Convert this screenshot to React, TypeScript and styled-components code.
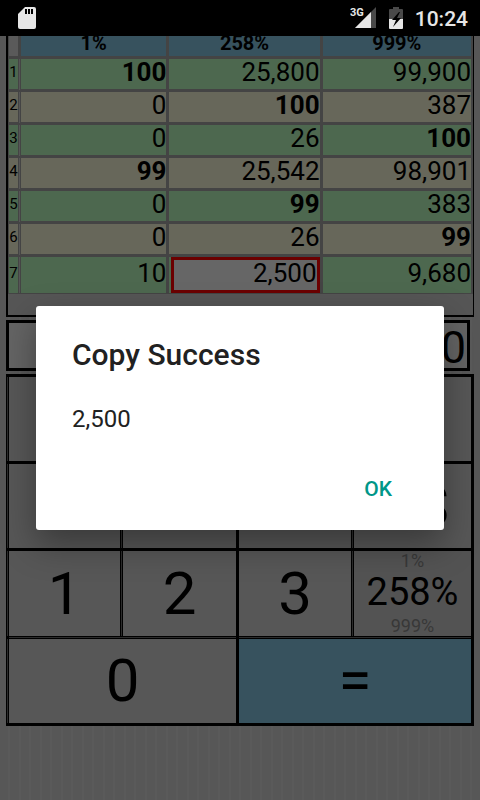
import React, { useState } from "react";
import styled, { createGlobalStyle, css } from "styled-components";

const line = "#444444";
const green = "#4d684f";
const sand = "#67675a";
const blue = "#37525e";
const seam = "#2c2c2c";

const Global = createGlobalStyle`
  * { box-sizing: border-box; }
  body {
    margin: 0;
    background: #575757;
    font-family: Roboto, sans-serif;
    color: #000;
  }
  button, input { font-family: inherit; color: inherit; }
`;

const Page = styled.div`
  position: relative;
  min-height: 100vh;
  display: flex;
  flex-direction: column;
  overflow: hidden;
  background: repeating-linear-gradient(
    90deg,
    #575757 0 8px,
    #5a5a5a 8px 10px,
    #575757 10px 19px,
    #5a5a5a 19px 21px
  );
`;

const StatusBar = styled.header`
  display: flex;
  align-items: center;
  height: 36px;
  padding: 0 12px 0 18px;
  background: #000;
  color: #e6e6e6;
`;

const StatusIcons = styled.div`
  display: flex;
  align-items: center;
  margin-left: auto;
  gap: 12px;
`;

const Clock = styled.time`
  font-size: 21px;
  line-height: 24px;
  font-weight: 500;
  padding-top: 1px;
`;

const Calculator = styled.main`
  display: flex;
  flex-direction: column;
  padding: 0 6px;
`;

const Results = styled.section`
  height: 281px;
  overflow: hidden;
  border: solid #000;
  border-width: 0 1px 2px 2px;
  background: #565656;
`;

const Sheet = styled.table`
  width: 100%;
  margin-top: -6px;
  table-layout: fixed;
  border-spacing: 0;
  border-left: 1px solid ${line};
  col:nth-child(1) { width: 12px; }
  col:nth-child(2) { width: 32%; }
  col:nth-child(3) { width: 33%; }
`;

const HeadCell = styled.th<{ $blank?: boolean }>`
  height: 29px;
  padding: 0;
  border: solid ${line};
  border-width: 0 3px 3px 0;
  background: ${(p) => (p.$blank ? "#5a5a5a" : blue)};
  font-size: 20px;
  line-height: 26px;
  font-weight: 700;
  &:last-child { border-right-width: 2px; }
`;

const Row = styled.tr<{ $tall?: boolean }>`
  height: ${(p) => (p.$tall ? 37 : 33)}px;
  > * {
    background: ${green};
    background-clip: padding-box;
    border-bottom-width: ${(p) => (p.$tall ? 1 : 3)}px;
  }
  &:nth-child(even) > * { background-color: ${sand}; }
`;

const IndexCell = styled.th`
  padding: 0 0 4px;
  border-color: ${line};
  border-style: solid double solid solid;
  border-top-width: 0;
  border-left-width: 0;
  border-right-width: 3px;
  font-size: 15px;
  line-height: 24px;
  font-weight: 400;
  text-align: center;
`;

const ValueCell = styled.td`
  padding: 0;
  border-style: solid;
  border-color: ${line};
  border-top-width: 0;
  border-left-width: 0;
  border-right-width: 3px;
  &:last-child { border-right-width: 2px; }
`;

const Value = styled.div<{ $bold?: boolean; $selected?: boolean }>`
  padding: 0 0 4px;
  font-size: 26px;
  line-height: 26px;
  font-weight: ${(p) => (p.$bold ? 700 : 400)};
  text-align: right;
  ${(p) =>
    p.$selected &&
    css`
      margin-left: 2px;
      border: 3px solid #6b0000;
      background: #666;
    `}
`;

const Display = styled.input`
  display: block;
  width: calc(100% - 4px);
  height: 51px;
  margin: 3px 0;
  padding: 3px 1px 0;
  border: 3px solid #000;
  border-radius: 0;
  background: #646464;
  font-size: 45px;
  text-align: right;
  outline: none;
`;

const Keypad = styled.section`
  display: grid;
  grid-template-columns: 111fr 113fr 112fr 117fr;
  grid-template-rows: 84px 84px 85px 84px;
  gap: 3px;
  padding: 3px;
  background: #000;
`;

const seams = {
  left: `-1px 0 #000, -2px 0 ${seam}`,
  top: `0 -1px #000, 0 -2px ${seam}`,
  both: `-1px 0 #000, 0 -1px #000, -2px 0 ${seam}, 0 -2px ${seam}`,
};

const Key = styled.button<{
  $wide?: boolean;
  $accent?: boolean;
  $seam?: keyof typeof seams;
}>`
  display: flex;
  flex-direction: column;
  align-items: center;
  justify-content: center;
  min-width: 0;
  padding: 0;
  border: 0;
  grid-column: span ${(p) => (p.$wide ? 2 : 1)};
  background: ${(p) => (p.$accent ? blue : "#575757")};
  box-shadow: ${(p) => (p.$seam ? seams[p.$seam] : "none")};
  font-size: 60px;
  line-height: 70px;
`;

const RateKey = styled(Key)`
  background: #535353;
`;

const Rate = styled.span<{ $current?: boolean }>`
  font-size: ${(p) => (p.$current ? 38 : 18)}px;
  line-height: ${(p) => (p.$current ? 42 : 20)}px;
  padding-bottom: ${(p) => (p.$current ? 3 : 0)}px;
  color: ${(p) => (p.$current ? "#000" : "#383838")};
`;

const Overlay = styled.div`
  position: absolute;
  inset: 36px 0 0;
  display: flex;
  align-items: center;
  justify-content: center;
  padding: 0 36px;
`;

const Dialog = styled.div`
  width: 100%;
  display: flex;
  flex-direction: column;
  padding: 31px 36px 20px;
  border-radius: 3px;
  background: #fff;
  color: #212121;
  box-shadow: 0 14px 34px rgba(0, 0, 0, 0.35);
`;

const Title = styled.h1`
  margin: 0;
  font-size: 30px;
  line-height: 36px;
  font-weight: 500;
`;

const Message = styled.p`
  margin: 31px 0 34px;
  font-size: 24px;
  line-height: 30px;
`;

const Confirm = styled.button`
  align-self: flex-end;
  height: 42px;
  padding: 0 16px;
  border: 0;
  background: transparent;
  color: #009688;
  font-size: 21px;
  line-height: 24px;
  font-weight: 500;
`;

const rates = ["1%", "258%", "999%"];

const rows: { cells: string[]; bold?: number }[] = [
  { cells: ["100", "25,800", "99,900"], bold: 0 },
  { cells: ["0", "100", "387"], bold: 1 },
  { cells: ["0", "26", "100"], bold: 2 },
  { cells: ["99", "25,542", "98,901"], bold: 0 },
  { cells: ["0", "99", "383"], bold: 1 },
  { cells: ["0", "26", "99"], bold: 2 },
  { cells: ["10", "2,500", "9,680"] },
];

const selected = { row: 6, col: 1 };

const SdCard = () => (
  <svg width="18" height="22" viewBox="0 0 18 22" aria-hidden="true">
    <path d="M7 0h9a2 2 0 0 1 2 2v18a2 2 0 0 1-2 2H2a2 2 0 0 1-2-2V7z" fill="#e6e6e6" />
    <path d="M7 2h2v5H7zM10 2h2v5h-2zM13 2h2v5h-2z" fill="#000" />
  </svg>
);

const Signal = () => (
  <svg width="27" height="22" viewBox="0 0 27 22" aria-label="3G signal">
    <path d="M26 0v21H5z" fill="#494949" />
    <path d="M21 5v16H5z" fill="#e6e6e6" />
    <text x="0" y="9" fontSize="11" fontWeight="700" fontFamily="Roboto, sans-serif" fill="#e6e6e6">
      3G
    </text>
  </svg>
);

const Battery = () => (
  <svg width="14" height="22" viewBox="0 0 14 22" aria-label="Battery charging">
    <path d="M4 0h6v2h3q1 0 1 1v9H0V3q0-1 1-1h3z" fill="#494949" />
    <path d="M0 12h14v9q0 1-1 1H1q-1 0-1-1z" fill="#e6e6e6" />
    <path d="M10 5 3 13h4l-3 7 8-9H8l3-6z" fill="#000" />
  </svg>
);

export default function App() {
  const [open, setOpen] = useState(true);

  return (
    <>
      <Global />
      <Page>
        <StatusBar>
          <SdCard />
          <StatusIcons>
            <Signal />
            <Battery />
            <Clock>10:24</Clock>
          </StatusIcons>
        </StatusBar>
        <Calculator>
          <Results>
            <Sheet>
              <colgroup>
                <col />
                <col />
                <col />
                <col />
              </colgroup>
              <thead>
                <tr>
                  <HeadCell $blank />
                  {rates.map((rate) => (
                    <HeadCell key={rate} scope="col">
                      {rate}
                    </HeadCell>
                  ))}
                </tr>
              </thead>
              <tbody>
                {rows.map((row, r) => (
                  <Row key={r} $tall={r === selected.row}>
                    <IndexCell scope="row">{r + 1}</IndexCell>
                    {row.cells.map((value, c) => (
                      <ValueCell key={c}>
                        <Value
                          $bold={row.bold === c}
                          $selected={r === selected.row && c === selected.col}
                        >
                          {value}
                        </Value>
                      </ValueCell>
                    ))}
                  </Row>
                ))}
              </tbody>
            </Sheet>
          </Results>
          <Display aria-label="Amount" defaultValue="0" inputMode="numeric" />
          <Keypad>
            <Key $seam="left">7</Key>
            <Key $seam="left">8</Key>
            <Key>9</Key>
            <Key $seam="left">C</Key>
            <Key $seam="left">4</Key>
            <Key $seam="left">5</Key>
            <Key>6</Key>
            <Key $seam="left">BS</Key>
            <Key $seam="left">1</Key>
            <Key $seam="left">2</Key>
            <Key>3</Key>
            <RateKey $seam="left">
              <Rate>1%</Rate>
              <Rate $current>258%</Rate>
              <Rate>999%</Rate>
            </RateKey>
            <Key $wide $seam="both">
              0
            </Key>
            <Key $wide $accent $seam="top">
              =
            </Key>
          </Keypad>
        </Calculator>
        {open && (
          <Overlay>
            <Dialog role="alertdialog" aria-modal="true" aria-labelledby="title">
              <Title id="title">Copy Success</Title>
              <Message>2,500</Message>
              <Confirm onClick={() => setOpen(false)}>OK</Confirm>
            </Dialog>
          </Overlay>
        )}
      </Page>
    </>
  );
}
